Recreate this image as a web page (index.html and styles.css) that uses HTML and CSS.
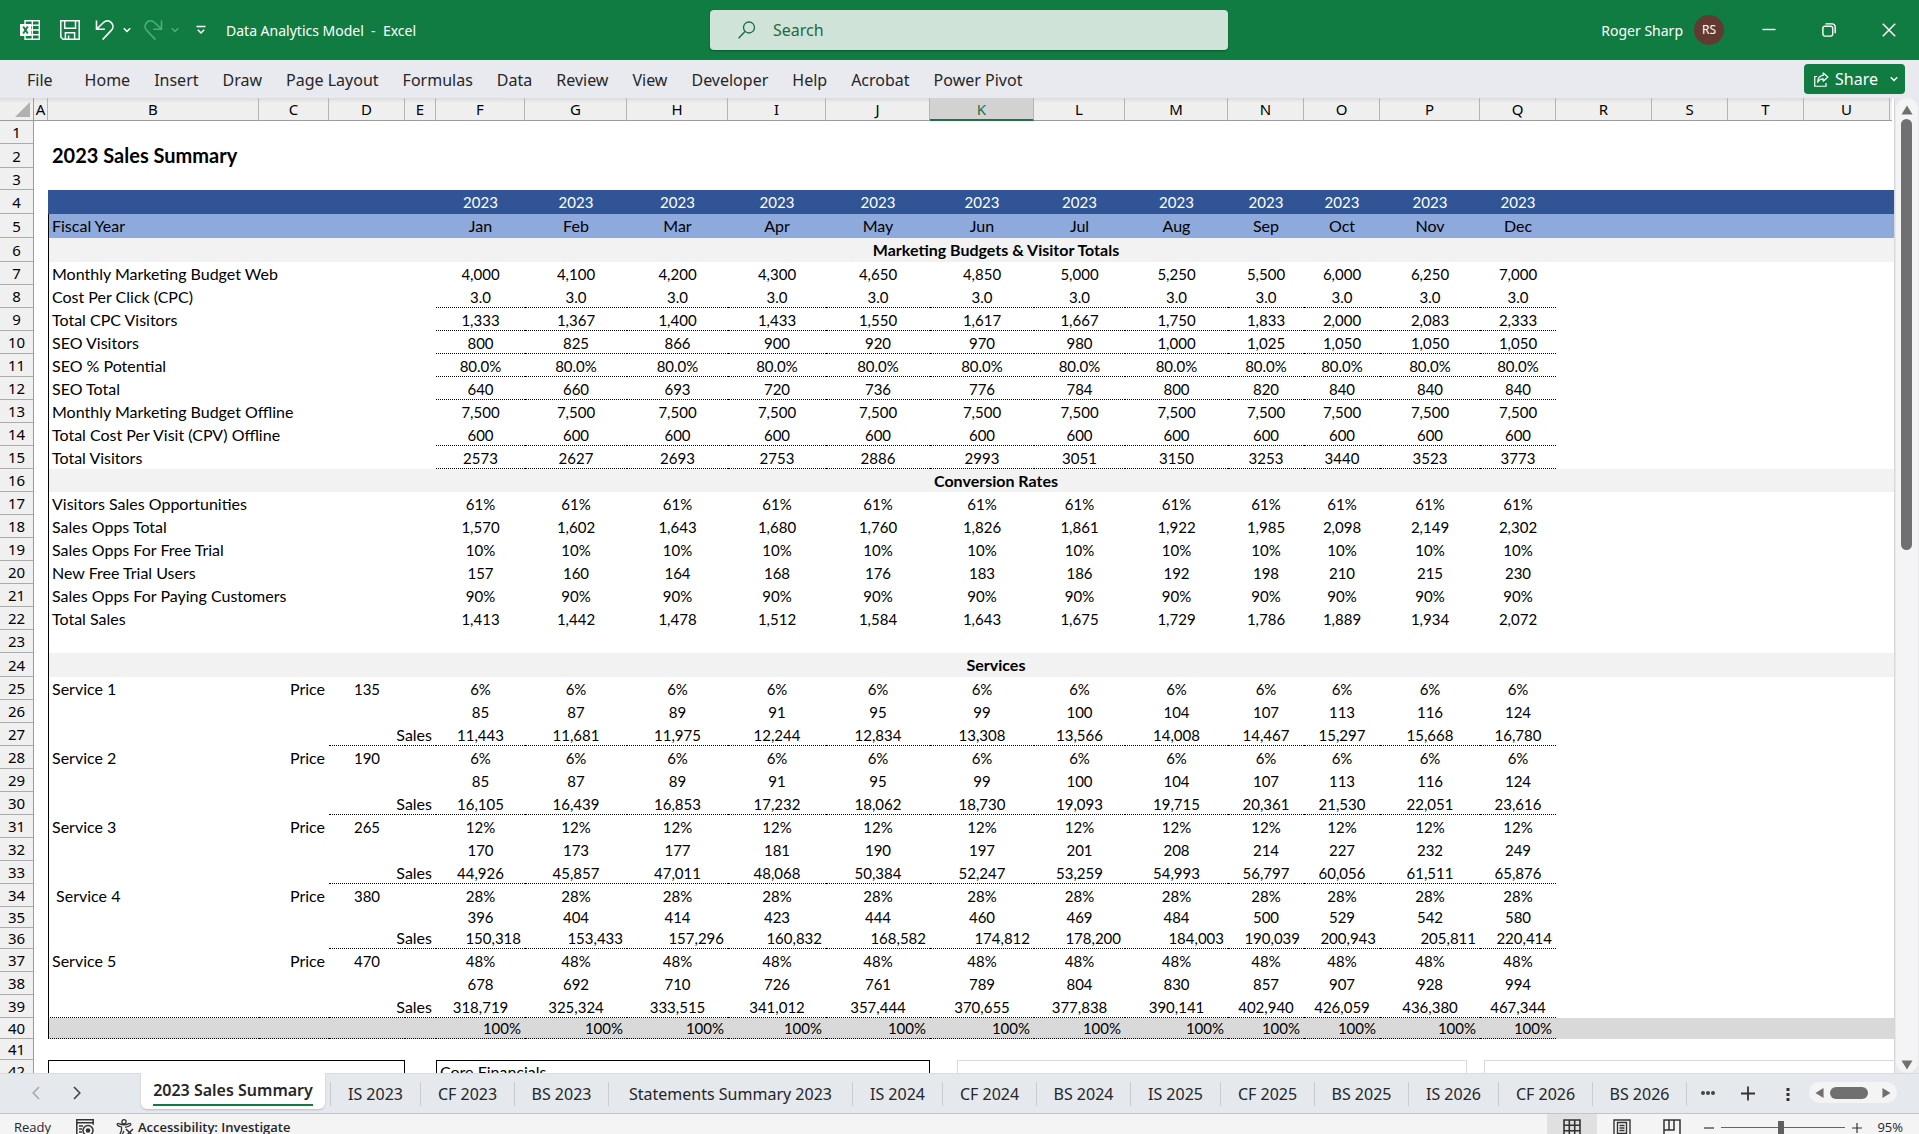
FILE: index.html
```html
<!DOCTYPE html>
<html lang="en">
<head>
<meta charset="utf-8">
<meta name="viewport" content="width=device-width, initial-scale=1">
<title>Data Analytics Model - Excel</title>
<link rel="stylesheet" href="styles.css">
</head>
<body>
<header class="titlebar">
  <div class="titlebar-left">
    <svg class="icon app-logo" viewBox="0 0 20 20" aria-hidden="true">
      <path d="M5 .7h14.3v18.6H5zM5 5.3h14.3M5 10h14.3M5 14.7h14.3M12.3.7v18.6" fill="none" stroke="#fff" stroke-width="1.4"/>
      <rect x="0" y="4" width="11" height="12" fill="#fff"/>
      <path d="M3.2 6.5l4.6 7M7.8 6.5l-4.6 7" stroke="#107c41" stroke-width="1.9"/>
    </svg>
    <button class="icon-btn save" aria-label="Save">
      <svg class="icon" viewBox="0 0 20 20"><path d="M.8.8h18.4v18.4H3L.8 17zM4.7.8v7.4h10.8V.8M5.4 19.2v-6.5h9.2v6.5M8.6 19.2v-3.6" fill="none" stroke="#fff" stroke-width="1.5"/></svg>
    </button>
    <button class="icon-btn undo" aria-label="Undo">
      <svg class="icon" viewBox="0 0 20 20"><path d="M1.5.5v8.8h8.3M1.8 9L8.500 2.500C11 .2 14.200.5 16.300 2.600c2.200 2.200 2.200 5.500 0 7.800L7.600 19.600" fill="none" stroke="#fff" stroke-width="1.6"/></svg>
    </button>
    <button class="icon-btn" aria-label="Undo history">
      <svg class="chev" viewBox="0 0 8 6"><path d="M.8 1.200L4 4.500l3.200-3.300" fill="none" stroke="#fff" stroke-width="1.500"/></svg>
    </button>
    <button class="icon-btn redo" aria-label="Redo" disabled>
      <svg class="icon" viewBox="0 0 20 20"><path d="M18.500.5v8.800h-8.300M18.200 9L11.500 2.500C9 .2 5.800.5 3.700 2.600c-2.200 2.200-2.200 5.500 0 7.800l8.700 9.200" fill="none" stroke="#4fae78" stroke-width="1.600"/></svg>
    </button>
    <button class="icon-btn" aria-label="Redo history" disabled>
      <svg class="chev" viewBox="0 0 8 6"><path d="M.8 1.200L4 4.500l3.200-3.300" fill="none" stroke="#4fae78" stroke-width="1.500"/></svg>
    </button>
    <button class="icon-btn customize" aria-label="Customize Quick Access Toolbar">
      <svg class="chev-bar" viewBox="0 0 10 10"><path d="M.5 1.500h9M1.800 4.800L5 8l3.200-3.200" fill="none" stroke="#fff" stroke-width="1.500"/></svg>
    </button>
    <span class="doc-title">Data Analytics Model&nbsp; -&nbsp; Excel</span>
  </div>
  <label class="search">
    <svg class="search-icon" viewBox="0 0 18 18" aria-hidden="true"><circle cx="11" cy="6.500" r="5.500" fill="none" stroke="#1d6b41" stroke-width="1.300"/><path d="M7 10.500L.6 17.300" stroke="#1d6b41" stroke-width="1.400"/></svg>
    <input type="search" placeholder="Search" aria-label="Search">
  </label>
  <div class="titlebar-right">
    <span class="user-name">Roger Sharp</span>
    <span class="avatar">RS</span>
    <button class="win-btn" aria-label="Minimize"><svg class="win-icon" viewBox="0 0 14 14"><path d="M.5 6.500h13" stroke="#fff" stroke-width="1.400"/></svg></button>
    <button class="win-btn" aria-label="Restore"><svg class="win-icon" viewBox="0 0 14 14"><rect x=".9" y="3.300" width="9.800" height="9.800" rx="2" fill="none" stroke="#fff" stroke-width="1.400"/><path d="M3.400.900h6.800a3 3 0 0 1 3 3v6.300" fill="none" stroke="#fff" stroke-width="1.400"/></svg></button>
    <button class="win-btn" aria-label="Close"><svg class="win-icon" viewBox="0 0 14 14"><path d="M.8.8l12.400 12.400M13.200.8L.8 13.200" stroke="#fff" stroke-width="1.500"/></svg></button>
  </div>
</header>

<nav class="ribbon" aria-label="Ribbon">
  <div class="ribbon-tabs">
    <button class="ribbon-tab file">File</button>
    <button class="ribbon-tab">Home</button>
    <button class="ribbon-tab">Insert</button>
    <button class="ribbon-tab">Draw</button>
    <button class="ribbon-tab">Page Layout</button>
    <button class="ribbon-tab">Formulas</button>
    <button class="ribbon-tab">Data</button>
    <button class="ribbon-tab">Review</button>
    <button class="ribbon-tab">View</button>
    <button class="ribbon-tab">Developer</button>
    <button class="ribbon-tab">Help</button>
    <button class="ribbon-tab">Acrobat</button>
    <button class="ribbon-tab">Power Pivot</button>
  </div>
  <button class="share">
    <svg class="share-icon" viewBox="0 0 16 16" aria-hidden="true"><path d="M3.500 4.800H.8v10.400h12v-3.400" fill="none" stroke="#fff" stroke-width="1.300"/><path d="M9.800 1l5 4.400-5 4.400V7.300C7 7.300 5.200 8.400 3.900 11 4 6.500 6 3.800 9.800 3.500z" fill="none" stroke="#fff" stroke-width="1.300" stroke-linejoin="round"/></svg>
    <span>Share</span>
    <svg class="chev" viewBox="0 0 8 6" aria-hidden="true"><path d="M.8 1.200L4 4.500l3.200-3.300" fill="none" stroke="#fff" stroke-width="1.500"/></svg>
  </button>
</nav>

<main class="workbook">
  <div class="sheet">
    <table class="grid">
      <colgroup>
        <col class="w-head"><col class="w-a"><col class="w-b"><col class="w-c"><col class="w-76"><col class="w-e"><col class="w-f"><col class="w-102"><col class="w-101"><col class="w-i"><col class="w-104"><col class="w-104"><col class="w-l"><col class="w-m"><col class="w-76"><col class="w-76"><col class="w-p"><col class="w-76"><col class="w-r"><col class="w-76"><col class="w-76"><col class="w-u"><col>
      </colgroup>
      <thead>
        <tr>
          <th class="corner"><svg class="corner-icon" viewBox="0 0 15 15" aria-hidden="true"><path d="M15 0v15H0z" fill="#b1b1b1"/></svg></th>
          <th>A</th><th>B</th><th>C</th><th>D</th><th>E</th><th>F</th><th>G</th><th>H</th><th>I</th><th>J</th><th class="current">K</th><th>L</th><th>M</th><th>N</th><th>O</th><th>P</th><th>Q</th><th>R</th><th>S</th><th>T</th><th>U</th><th class="rest"></th>
        </tr>
      </thead>
      <tbody id="cells"></tbody>
    </table>
    <div class="chart chart-left"></div>
    <div class="chart chart-right"></div>
  </div>
  <div class="vscroll">
    <svg class="arrow" viewBox="0 0 12 10" aria-hidden="true"><path d="M6 .5L11.500 9.500H.5z" fill="#707070"/></svg>
    <div class="vtrack"><div class="vthumb"></div></div>
    <svg class="arrow" viewBox="0 0 12 10" aria-hidden="true"><path d="M6 9.500L11.500.5H.5z" fill="#707070"/></svg>
  </div>
</main>

<nav class="sheetbar" aria-label="Sheets">
  <div class="sheet-nav">
    <button class="nav-btn" aria-label="Previous sheet" disabled><svg class="nav-icon" viewBox="0 0 8 14"><path d="M7 1L1.200 7 7 13" fill="none" stroke="#a3a5a8" stroke-width="1.500"/></svg></button>
    <button class="nav-btn" aria-label="Next sheet"><svg class="nav-icon" viewBox="0 0 8 14"><path d="M1 1l5.800 6L1 13" fill="none" stroke="#444" stroke-width="1.600"/></svg></button>
  </div>
  <button class="tab active"><span>2023 Sales Summary</span></button>
  <div class="tabs">
    <button class="tab is">IS 2023</button>
    <button class="tab">CF 2023</button>
    <button class="tab">BS 2023</button>
    <button class="tab wide">Statements Summary 2023</button>
    <button class="tab is">IS 2024</button>
    <button class="tab">CF 2024</button>
    <button class="tab">BS 2024</button>
    <button class="tab is">IS 2025</button>
    <button class="tab">CF 2025</button>
    <button class="tab">BS 2025</button>
    <button class="tab is">IS 2026</button>
    <button class="tab">CF 2026</button>
    <button class="tab">BS 2026</button>
  </div>
  <div class="tab-tools">
    <button class="tool" aria-label="More sheets"><svg class="tool-icon" viewBox="0 0 16 16"><circle cx="3" cy="7" r="2" fill="#444"/><circle cx="8" cy="7" r="2" fill="#444"/><circle cx="13" cy="7" r="2" fill="#444"/></svg></button>
    <button class="tool" aria-label="New sheet"><svg class="tool-icon" viewBox="0 0 16 16"><path d="M8 .5v14M1 7.500h14" stroke="#333" stroke-width="1.800"/></svg></button>
    <button class="tool" aria-label="Resize tabs"><svg class="tool-icon" viewBox="0 0 16 16"><path d="M6.500 2h3v3h-3zM6.500 7h3v3h-3zM6.500 12h3v3h-3z" fill="#333"/></svg></button>
  </div>
  <div class="hscroll">
    <svg class="harrow" viewBox="0 0 10 12" aria-hidden="true"><path d="M.5 6l9-5.500v11z" fill="#707070"/></svg>
    <div class="hthumb"></div>
    <svg class="harrow" viewBox="0 0 10 12" aria-hidden="true"><path d="M9.500 6l-9-5.500v11z" fill="#707070"/></svg>
  </div>
</nav>

<footer class="statusbar">
  <span class="ready">Ready</span>
  <button class="status-btn macro" aria-label="Record macro"><svg class="status-icon" viewBox="0 0 18 18"><path d="M6 16H.8V.8h16.400v5M.8 3.800h16.400M3 7h4M3 10h3M3 13h3" fill="none" stroke="#333" stroke-width="1.500"/><circle cx="12" cy="11.500" r="5" fill="none" stroke="#333" stroke-width="1.500"/><circle cx="12" cy="11.500" r="2.300" fill="#333"/></svg></button>
  <button class="status-btn access"><svg class="status-icon" viewBox="0 0 18 18" aria-hidden="true"><circle cx="8" cy="2.800" r="2.100" fill="none" stroke="#333" stroke-width="1.300"/><path d="M9 8.300c2-.5 5-1.600 5.500-2.200.7-1-.4-2-1.500-1.500-3 1.400-7 1.400-10 0C1.800 4 .7 5.200 1.500 6.200c.6.600 2.500 1.300 4 1.800v3.500L3.600 16c-.3 1.200 1.200 1.800 1.900.8L8 12" fill="none" stroke="#333" stroke-width="1.300"/><path d="M10 10l7 7M17 10l-7 7" stroke="#333" stroke-width="1.500"/></svg><span>Accessibility: Investigate</span></button>
  <div class="views">
    <button class="view on" aria-label="Normal view"><svg class="status-icon" viewBox="0 0 18 18"><path d="M1 1h16v16H1zM6.300 1v16M11.700 1v16M1 6.300h16M1 11.700h16" fill="none" stroke="#333" stroke-width="1.600"/></svg></button>
    <button class="view" aria-label="Page layout view"><svg class="status-icon" viewBox="0 0 18 18"><path d="M1 1h16v16H1zM4.500 3.500h9v11h-9zM6.500 6.500h5M6.500 9h5M6.500 11.500h5" fill="none" stroke="#333" stroke-width="1.400"/></svg></button>
    <button class="view" aria-label="Page break preview"><svg class="status-icon" viewBox="0 0 18 18"><path d="M1 1h16v16H1zM1 11h10V1M6 1v10" fill="none" stroke="#333" stroke-width="1.500"/></svg></button>
  </div>
  <div class="zoom">
    <button class="zoom-btn" aria-label="Zoom out"><svg class="zoom-icon" viewBox="0 0 10 10"><path d="M0 5h10" stroke="#333" stroke-width="1.200"/></svg></button>
    <input class="zoom-range" type="range" min="10" max="180" value="91" aria-label="Zoom">
    <button class="zoom-btn" aria-label="Zoom in"><svg class="zoom-icon" viewBox="0 0 10 10"><path d="M0 5h10M5 0v10" stroke="#333" stroke-width="1.200"/></svg></button>
    <span class="zoom-value">95%</span>
  </div>
</footer>
<script src="sheet.js"></script>
</body>
</html>
```

FILE: sheet.js
```js
// Each row: number, height class, row class, and its cells.
// values holds the twelve months, columns F to Q.
const split = (text) => text.split(" ");
const same = (value) => Array(12).fill(value);

const rows = [
  { n: 1 },
  { n: 2, size: "tall", label: "2023 Sales Summary", labelClass: "title" },
  { n: 3, size: "low" },
  { n: 4, size: "tall", kind: "years", values: same("2023") },
  { n: 5, size: "tall", kind: "months", label: "Fiscal Year", values: split("Jan Feb Mar Apr May Jun Jul Aug Sep Oct Nov Dec") },
  { n: 6, size: "tall", kind: "band", heading: "Marketing Budgets & Visitor Totals" },
  { n: 7, label: "Monthly Marketing Budget Web", values: split("4,000 4,100 4,200 4,300 4,650 4,850 5,000 5,250 5,500 6,000 6,250 7,000") },
  { n: 8, kind: "rule", label: "Cost Per Click (CPC)", values: same("3.0") },
  { n: 9, kind: "rule", label: "Total CPC Visitors", values: split("1,333 1,367 1,400 1,433 1,550 1,617 1,667 1,750 1,833 2,000 2,083 2,333") },
  { n: 10, kind: "rule", label: "SEO Visitors", values: split("800 825 866 900 920 970 980 1,000 1,025 1,050 1,050 1,050") },
  { n: 11, kind: "rule", label: "SEO % Potential", values: same("80.0%") },
  { n: 12, kind: "rule", label: "SEO Total", values: split("640 660 693 720 736 776 784 800 820 840 840 840") },
  { n: 13, label: "Monthly Marketing Budget Offline", values: same("7,500") },
  { n: 14, kind: "rule", label: "Total Cost Per Visit (CPV) Offline", values: same("600") },
  { n: 15, kind: "rule", label: "Total Visitors", values: split("2573 2627 2693 2753 2886 2993 3051 3150 3253 3440 3523 3773") },
  { n: 16, kind: "band", heading: "Conversion Rates" },
  { n: 17, label: "Visitors Sales Opportunities", values: same("61%") },
  { n: 18, label: "Sales Opps Total", values: split("1,570 1,602 1,643 1,680 1,760 1,826 1,861 1,922 1,985 2,098 2,149 2,302") },
  { n: 19, label: "Sales Opps For Free Trial", values: same("10%") },
  { n: 20, label: "New Free Trial Users", values: split("157 160 164 168 176 183 186 192 198 210 215 230") },
  { n: 21, label: "Sales Opps For Paying Customers", values: same("90%") },
  { n: 22, label: "Total Sales", values: split("1,413 1,442 1,478 1,512 1,584 1,643 1,675 1,729 1,786 1,889 1,934 2,072") },
  { n: 23 },
  { n: 24, size: "tall", kind: "band", heading: "Services" },
  { n: 25, label: "Service 1", price: "135", values: same("6%") },
  { n: 26, values: split("85 87 89 91 95 99 100 104 107 113 116 124") },
  { n: 27, kind: "rule rule-from-d", sales: true, values: split("11,443 11,681 11,975 12,244 12,834 13,308 13,566 14,008 14,467 15,297 15,668 16,780") },
  { n: 28, label: "Service 2", price: "190", values: same("6%") },
  { n: 29, values: split("85 87 89 91 95 99 100 104 107 113 116 124") },
  { n: 30, kind: "rule rule-from-d", sales: true, values: split("16,105 16,439 16,853 17,232 18,062 18,730 19,093 19,715 20,361 21,530 22,051 23,616") },
  { n: 31, label: "Service 3", price: "265", values: same("12%") },
  { n: 32, values: split("170 173 177 181 190 197 201 208 214 227 232 249") },
  { n: 33, kind: "rule rule-from-d", sales: true, values: split("44,926 45,857 47,011 48,068 50,384 52,247 53,259 54,993 56,797 60,056 61,511 65,876") },
  { n: 34, label: "\u00a0Service 4", price: "380", values: same("28%") },
  { n: 35, size: "short", values: split("396 404 414 423 444 460 469 484 500 529 542 580") },
  { n: 36, size: "short", kind: "rule rule-from-d right", sales: true, values: split("150,318 153,433 157,296 160,832 168,582 174,812 178,200 184,003 190,039 200,943 205,811 220,414") },
  { n: 37, label: "Service 5", price: "470", values: same("48%") },
  { n: 38, values: split("678 692 710 726 761 789 804 830 857 907 928 994") },
  { n: 39, kind: "rule rule-from-b", sales: true, values: split("318,719 325,324 333,515 341,012 357,444 370,655 377,838 390,141 402,940 426,059 436,380 467,344") },
  { n: 40, size: "short", kind: "totals rule rule-from-b right", values: same("100%") },
  { n: 41, size: "short" },
  { n: 42, kind: "boxes", core: "Core Financials" },
];

function cell(className, text, span) {
  const td = document.createElement("td");
  td.className = className;
  td.textContent = text || "";
  if (span) td.colSpan = span;
  return td;
}

const body = document.getElementById("cells");
for (const row of rows) {
  const tr = document.createElement("tr");
  const framed = row.n >= 5 && row.n <= 40 ? "framed" : "";
  tr.className = [row.size, row.kind, framed].filter(Boolean).join(" ");

  const head = document.createElement("th");
  head.scope = "row";
  head.textContent = row.n;
  tr.append(head, cell("a"));

  tr.append(cell(row.labelClass ? "b " + row.labelClass : "b", row.label));
  tr.append(cell("c", row.price ? "Price" : ""));
  tr.append(cell("d", row.price));
  tr.append(cell("e", row.sales ? "Sales" : ""));

  if (row.heading) {
    tr.append(cell("heading", row.heading, 12));
  } else if (row.core) {
    tr.append(cell("core", row.core, 5), cell("", "", 7));
  } else {
    for (let i = 0; i < 12; i++) tr.append(cell("v", row.values && row.values[i]));
  }
  tr.append(cell("tail", "", 6));
  body.append(tr);
}
```

FILE: styles.css
```css
:root {
  --green: #107c41;
  --bar: #e5e8ec;
  --rule: #000;
  --ui: "Noto Sans", "Open Sans", sans-serif;
  --cell: Lato, "Noto Sans", sans-serif;
}

* { box-sizing: border-box; }

body {
  margin: 0;
  height: 100vh;
  display: flex;
  flex-direction: column;
  overflow: hidden;
  font-family: var(--ui);
  font-size: 16px;
  color: #262626;
  background: var(--bar);
}

button {
  border: 0;
  padding: 0;
  background: none;
  font: inherit;
  color: inherit;
  white-space: nowrap;
}

svg { display: block; }

/* Title bar */
.titlebar {
  flex: none;
  height: 60px;
  display: grid;
  grid-template-columns: 37% 27% 1fr;
  align-items: center;
  background: var(--green);
  color: #fff;
  font-size: 14px;
}
.titlebar-left {
  display: flex;
  align-items: center;
  padding-left: 20px;
}
.icon { width: 20px; height: 20px; }
.chev { width: 8px; height: 6px; }
.chev-bar { width: 10px; height: 10px; }
.save { margin-left: 20px; }
.undo { margin: 0 8px 0 15px; }
.redo { margin: 0 8px 0 12px; }
.customize { margin: 0 20px 0 17px; }
.doc-title { white-space: pre; }

.search {
  height: 40px;
  display: flex;
  align-items: center;
  gap: 17px;
  padding: 0 28px;
  border-radius: 4px;
  background: #cfe3d8;
  box-shadow: 0 1px 2px rgba(0, 0, 0, .3);
}
.search-icon { width: 18px; height: 18px; }
.search input {
  flex: 1;
  border: 0;
  padding: 0;
  background: none;
  outline: 0;
  font: 16px var(--ui);
  color: #1d6b41;
}
.search input::placeholder { color: #1d6b41; opacity: 1; }

.titlebar-right {
  display: flex;
  align-items: center;
  justify-content: flex-end;
}
.avatar {
  width: 30px;
  height: 30px;
  margin: 0 15px 0 11px;
  border-radius: 50%;
  background: #633a31;
  font-size: 12px;
  line-height: 30px;
  text-align: center;
}
.win-btn {
  width: 60px;
  height: 60px;
  display: grid;
  place-items: center;
}
.win-icon { width: 14px; height: 14px; }

/* Ribbon */
.ribbon {
  flex: none;
  height: 38px;
  display: flex;
  justify-content: space-between;
  background: #e8eaef;
  padding-right: 14px;
}
.ribbon-tabs {
  display: flex;
  align-items: center;
  gap: 24px;
  padding: 2px 0 0 27px;
}
.file { margin-right: 8px; }
.share {
  display: flex;
  align-items: center;
  width: 101px;
  height: 30px;
  margin-top: 4px;
  padding: 0 7px 0 10px;
  gap: 6px;
  border-radius: 4px;
  background: var(--green);
  color: #fff;
}
.share .chev { margin-left: auto; }
.share-icon { width: 15px; height: 15px; }

/* Sheet */
.workbook {
  flex: 1;
  min-height: 0;
  display: flex;
}
.sheet {
  flex: 1;
  min-width: 0;
  position: relative;
  overflow: hidden;
  background: #fff;
  border-right: 1px solid #d5d7da;
}
.grid {
  width: 100%;
  table-layout: fixed;
  border-collapse: separate;
  border-spacing: 0;
  font-family: var(--cell);
  font-size: 16px;
  line-height: 20px;
  color: #000;
}
.w-head { width: 34px; }
.w-a { width: 14px; }
.w-b { width: 211px; }
.w-c { width: 70px; }
.w-e { width: 31px; }
.w-f { width: 89px; }
.w-i { width: 98px; }
.w-l { width: 91px; }
.w-m { width: 103px; }
.w-p { width: 100px; }
.w-r { width: 96px; }
.w-u { width: 86px; }
.w-76 { width: 76px; }
.w-101 { width: 101px; }
.w-102 { width: 102px; }
.w-104 { width: 104px; }

.grid th, .grid td {
  padding: 0;
  white-space: nowrap;
}
.grid th {
  font-family: var(--ui);
  font-size: 15px;
  font-weight: 400;
  background: #f0f0f0;
  border-right: 1px solid #9b9b9b;
}
.grid thead th {
  height: 23px;
  background: linear-gradient(#dcdcdc, #efefef 5px);
  border-right-color: #b5b5b5;
  border-bottom: 1px solid #9b9b9b;
}
.grid thead .corner { padding: 0 3px 0 15px; border-right-color: #9b9b9b; }
.grid thead .rest { border-right: 0; }
.grid thead .current {
  background: #d2d2d2;
  border-bottom: 2px solid #217346;
  color: #217346;
}
.corner-icon { width: 15px; height: 15px; }
.grid tbody tr { height: 23px; }
.grid tbody tr.tall { height: 24px; }
.grid tbody tr.low { height: 22px; }
.grid tbody tr.short { height: 21px; }
.grid tbody th { border-bottom: 1px solid #ababab; }
.grid td { vertical-align: bottom; padding-bottom: 1px; }
.grid .tall td { padding-bottom: 2px; }

.grid .b { padding-left: 4px; }
.grid .c, .grid .e { text-align: right; padding-right: 4px; }
.grid .e { direction: rtl; }
.d, .v, .heading { text-align: center; }
.d, .v { font-size: 15px; }
.months .v { font-size: 16px; }
.grid .right .v { text-align: right; padding-right: 4px; }
.grid .title { font-size: 20px; font-weight: 700; line-height: 22px; }
.heading { font-weight: 700; }

.grid .framed .b { border-left: 1px solid var(--rule); padding-left: 3px; }
.years .b, .years .c, .years .d, .years .e, .years .v, .years .tail { background: #305496; color: #fff; }
.months .b, .months .c, .months .d, .months .e, .months .v, .months .tail { background: #8ea9db; }
.band .b, .band .c, .band .d, .band .e, .band .heading, .band .tail { background: #f2f2f2; }
.totals .b, .totals .c, .totals .d, .totals .e, .totals .v, .totals .tail { background: #d9d9d9; }

.grid .rule .v,
.grid .rule-from-d .d, .grid .rule-from-d .e,
.grid .rule-from-b .b, .grid .rule-from-b .c, .grid .rule-from-b .d, .grid .rule-from-b .e {
  border-bottom: 1px dotted var(--rule);
  padding-bottom: 0;
}

.boxes .b, .boxes .c, .boxes .d, .boxes .core { border-top: 1px solid var(--rule); }
.boxes .b, .boxes .core { border-left: 1px solid var(--rule); }
.boxes .d, .boxes .core { border-right: 1px solid var(--rule); }
.grid .core { padding-left: 3px; }

/* Charts floating over the cells */
.chart {
  position: absolute;
  top: 962px;
  height: 240px;
  border: 1px solid #d9d9d9;
  background: #fff;
}
.chart-left { left: 957px; width: 510px; }
.chart-right { left: 1484px; width: 510px; }

.vscroll {
  flex: none;
  width: 22px;
  margin: 0 1px;
  padding: 7px 5px 3px;
  display: flex;
  flex-direction: column;
  gap: 4px;
  border-radius: 11px;
  background: #f4f4f4;
}
.arrow { width: 12px; height: 10px; }
.vtrack { flex: 1; }
.vthumb {
  height: 46%;
  width: 11px;
  border-radius: 6px;
  background: #707070;
}

/* Sheet tabs */
.sheetbar {
  flex: none;
  height: 41px;
  display: flex;
  align-items: stretch;
  background: var(--bar);
  border-top: 1px solid #d9dbde;
  border-bottom: 1px solid #c3c5c8;
}
.sheet-nav {
  width: 141px;
  display: flex;
  align-items: center;
  gap: 33px;
  padding: 0 0 2px 32px;
}
.nav-icon { width: 8px; height: 14px; }
.tab {
  width: 94px;
  height: 24px;
  border-right: 1px solid #c9ccd0;
  text-align: center;
  line-height: 24px;
}
.tab.is { width: 90px; }
.tab.wide { width: 244px; }
.tab.active {
  width: 184px;
  height: 36px;
  margin-top: -1px;
  border: 0;
  border-radius: 0 0 6px 6px;
  background: #fff;
  box-shadow: 0 1px 2px rgba(0, 0, 0, .18);
  font-weight: 600;
}
.active span {
  display: inline-block;
  border-bottom: 2px solid var(--green);
  line-height: 28px;
}
.tabs {
  display: flex;
  align-items: center;
  margin: 8px 0 0 5px;
  border-left: 1px solid #c9ccd0;
  height: 24px;
}
.tab-tools {
  display: flex;
  flex: 1;
  align-items: center;
  gap: 24px;
  padding-left: 13px;
}
.tool-icon { width: 16px; height: 16px; }
.hscroll {
  display: flex;
  align-items: center;
  justify-content: space-between;
  width: 88px;
  height: 21px;
  margin: 8px 22px 0 0;
  padding: 0 6px;
  border-radius: 11px;
  background: #f4f4f4;
}
.harrow { width: 9px; height: 12px; }
.hthumb {
  width: 38px;
  height: 12px;
  margin-right: 8px;
  border-radius: 6px;
  background: #707070;
}

/* Status bar */
.statusbar {
  flex: none;
  height: 20px;
  display: flex;
  align-items: flex-start;
  overflow: hidden;
  padding-left: 14px;
  background: #f4f4f4;
  font-family: "Open Sans", "Noto Sans", sans-serif;
  font-size: 13px;
  line-height: 27px;
}
.status-icon { width: 18px; height: 18px; }
.status-btn {
  display: flex;
  align-items: center;
  gap: 4px;
  height: 27px;
  margin-left: 22px;
  font-weight: 600;
}
.macro { margin-left: 25px; }
.views { display: flex; margin-left: auto; }
.view {
  width: 50px;
  height: 27px;
  display: grid;
  place-items: center;
}
.view.on { background: #e0e0e0; }
.zoom {
  display: flex;
  align-items: center;
  height: 27px;
  margin-left: 7px;
  padding-right: 16px;
  gap: 7px;
}
.zoom-icon { width: 10px; height: 10px; }
.zoom-range {
  appearance: none;
  width: 124px;
  height: 16px;
  margin: 0;
  background: linear-gradient(#666, #666) center / 100% 1px no-repeat;
}
.zoom-range::-webkit-slider-thumb {
  appearance: none;
  width: 6px;
  height: 14px;
  background: #606060;
}
.zoom-value { margin-left: 8px; }
```
